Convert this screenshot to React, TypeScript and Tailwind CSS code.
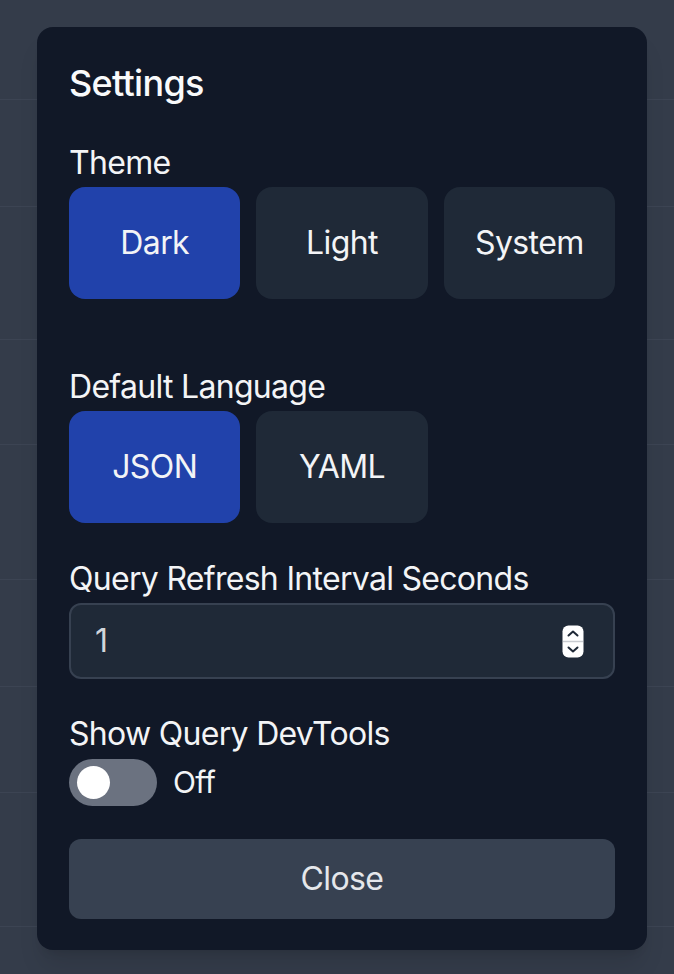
import React from "react";

const rows = [100, 107, 133, 105, 135, 107, 106, 134, 100];

function Spinner() {
  return (
    <svg width="22" height="33" viewBox="0 0 22 33" className="shrink-0">
      <rect x="0.5" y="0.5" width="21" height="32" rx="6" fill="#ffffff" />
      <line x1="1" y1="16.5" x2="21" y2="16.5" stroke="#c9ccd1" strokeWidth="1.5" />
      <path d="M6.5 10.5 L11 6.5 L15.5 10.5" fill="none" stroke="#1f2937" strokeWidth="2" strokeLinecap="round" strokeLinejoin="round" />
      <path d="M6.5 22.5 L11 26.5 L15.5 22.5" fill="none" stroke="#1f2937" strokeWidth="2" strokeLinecap="round" strokeLinejoin="round" />
    </svg>
  );
}

function Choice({ label, active }: { label: string; active?: boolean }) {
  return (
    <button
      className={
        active
          ? "rounded-[16px] bg-[#2142ab] py-8 text-[32px] leading-[48px] tracking-[-0.6px] text-[#f3f4f6]"
          : "rounded-[16px] bg-[#1f2937] py-8 text-[32px] leading-[48px] tracking-[-0.6px] text-[#f3f4f6]"
      }
    >
      {label}
    </button>
  );
}

export default function App() {
  return (
    <div
      className="relative h-[974px] w-[674px] overflow-hidden bg-[#343c4a]"
      style={{ fontFamily: "Inter, 'Noto Sans', sans-serif" }}
    >
      <div className="flex flex-col">
        {rows.map((h, i) => (
          <div key={i} className="border-b border-[#3c4453]" style={{ height: h }} />
        ))}
      </div>

      <div className="absolute left-[37px] top-[27px] flex h-[923px] w-[610px] flex-col rounded-[16px] bg-[#111827] p-8 shadow-xl">
        <h2 className="text-[36px] font-[550] leading-[48px] tracking-[-0.7px] text-[#f9fafb]">Settings</h2>

        <div className="mt-8 flex flex-col">
          <div className="text-[32px] leading-[48px] tracking-[-0.7px] text-[#f3f4f6]">Theme</div>
          <div className="grid grid-cols-3 gap-4">
            <Choice label="Dark" active />
            <Choice label="Light" />
            <Choice label="System" />
          </div>
        </div>

        <div className="mt-[64px] flex flex-col">
          <div className="text-[32px] leading-[48px] tracking-[-0.7px] text-[#f3f4f6]">Default Language</div>
          <div className="grid grid-cols-3 gap-4">
            <Choice label="JSON" active />
            <Choice label="YAML" />
          </div>
        </div>

        <div className="mt-8 flex flex-col">
          <div className="text-[32px] leading-[48px] tracking-[-0.7px] text-[#f3f4f6]">Query Refresh Interval Seconds</div>
          <div className="flex items-center justify-between rounded-[12px] border-2 border-[#374151] bg-[#1f2937] py-3 pl-6 pr-[29px]">
            <span className="text-[32px] leading-[48px] text-[#d1d5db]">1</span>
            <Spinner />
          </div>
        </div>

        <div className="mt-[31px] flex flex-col">
          <div className="text-[32px] leading-[48px] tracking-[-0.7px] text-[#f3f4f6]">Show Query DevTools</div>
          <div className="flex items-center gap-4">
            <div className="flex h-[47px] w-[88px] items-center rounded-full bg-[#6b7280] pl-2">
              <div className="h-[33px] w-[33px] rounded-full bg-white" />
            </div>
            <span className="text-[30px] leading-[48px] tracking-[-0.6px] text-[#f3f4f6]">Off</span>
          </div>
        </div>

        <button className="mt-[33px] rounded-[12px] bg-[#374151] py-4 text-[32px] leading-[48px] tracking-[-0.6px] text-[#e5e7eb]">
          Close
        </button>
      </div>
    </div>
  );
}
